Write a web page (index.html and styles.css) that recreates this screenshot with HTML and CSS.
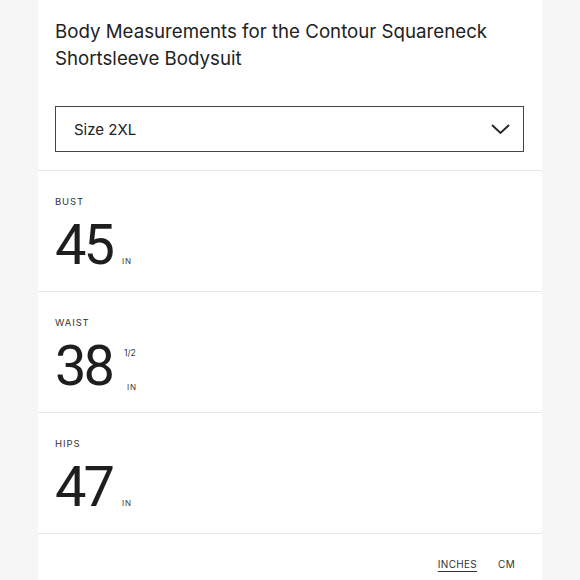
FILE: index.html
```html
<!DOCTYPE html>
<html lang="en">
<head>
<meta charset="utf-8">
<title>Body Measurements</title>
<link rel="stylesheet" href="styles.css">
</head>
<body>
<div class="card">
  <h1 class="title">Body Measurements for the Contour Squareneck Shortsleeve Bodysuit</h1>
  <div class="select">
    <span class="select-text">Size 2XL</span>
    <svg class="chevron" width="19" height="10" viewBox="0 0 19 10"><path d="M1 1 L9.5 9 L18 1" fill="none" stroke="#222" stroke-width="1.8"/></svg>
  </div>
  <div class="section">
    <div class="label">BUST</div>
    <div class="value">
      <span class="num">45</span>
      <span class="unit">IN</span>
    </div>
  </div>
  <div class="section">
    <div class="label">WAIST</div>
    <div class="value">
      <span class="num">38</span>
      <span class="stack"><span class="frac">1/2</span><span class="unit">IN</span></span>
    </div>
  </div>
  <div class="section">
    <div class="label">HIPS</div>
    <div class="value">
      <span class="num">47</span>
      <span class="unit">IN</span>
    </div>
  </div>
  <div class="footer">
    <span class="toggle active">INCHES</span>
    <span class="toggle">CM</span>
  </div>
</div>
</body>
</html>
```

FILE: styles.css
```css
html, body {
  margin: 0;
  padding: 0;
  background: #f6f6f6;
}
body {
  font-family: Inter, "Noto Sans", sans-serif;
  color: #222;
}
.card {
  margin-left: 38px;
  width: 504px;
  min-height: 580px;
  background: #fff;
}
.title {
  margin: 0;
  padding: 18px 40px 0 17px;
  font-size: 18.7px;
  line-height: 27px;
  font-weight: 400;
  color: #222;
}
.select {
  margin: 34px 18px 18px 17px;
  height: 44px;
  border: 1.5px solid #444;
  display: flex;
  align-items: center;
  justify-content: space-between;
  padding: 0 13px 0 18px;
}
.select-text {
  font-size: 15px;
  color: #222;
}
.section {
  border-top: 1.5px solid #e6e6e6;
  padding: 25px 17px 18px;
}
.label {
  font-size: 9.5px;
  line-height: 12px;
  letter-spacing: 0.9px;
  color: #333;
}
.value {
  margin-top: 10px;
  display: flex;
  align-items: baseline;
}
.num {
  font-family: Roboto, "Liberation Sans", sans-serif;
  font-size: 56px;
  line-height: 55px;
  letter-spacing: -3px;
  color: #1e1e1e;
}
.unit {
  margin-left: 10px;
  font-size: 8px;
  letter-spacing: 0.8px;
  color: #333;
}
.stack {
  display: inline-flex;
  flex-direction: column;
  align-self: stretch;
  justify-content: space-between;
  margin-left: 12px;
  padding: 9px 0 2px;
}
.stack .unit {
  margin-left: 3px;
}
.frac {
  font-size: 8.5px;
  color: #333;
}
.footer {
  border-top: 1.5px solid #e6e6e6;
  display: flex;
  justify-content: flex-end;
  gap: 21px;
  padding: 24px 27px 0 0;
}
.toggle {
  font-size: 10px;
  letter-spacing: 0.3px;
  color: #333;
}
.toggle.active {
  text-decoration: underline;
  text-underline-offset: 3px;
}
```
